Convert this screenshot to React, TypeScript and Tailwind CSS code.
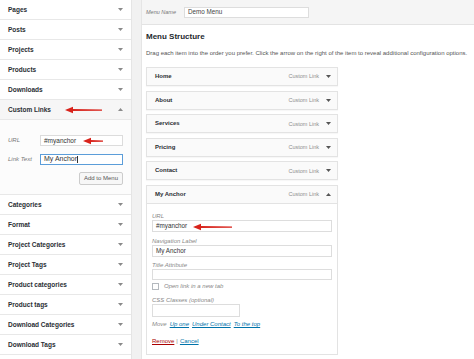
import React from "react";

const topSections = ["Pages", "Posts", "Projects", "Products", "Downloads"];
const bottomSections = [
  "Categories",
  "Format",
  "Project Categories",
  "Project Tags",
  "Product categories",
  "Product tags",
  "Download Categories",
  "Download Tags",
];
const menuItems = ["Home", "About", "Services", "Pricing", "Contact"];

function Caret({ up = false, className = "" }: { up?: boolean; className?: string }) {
  return (
    <svg width="5" height="3" viewBox="0 0 5 3" className={className}>
      <polygon points={up ? "0,3 5,3 2.5,0" : "0,0 5,0 2.5,3"} fill="currentColor" />
    </svg>
  );
}

function RedArrow({ x, y, w }: { x: number; y: number; w: number }) {
  // arrow points left, head at (x, y)
  return (
    <svg
      className="absolute pointer-events-none"
      style={{ left: x, top: y - 4, width: w, height: 8 }}
      viewBox={`0 0 ${w} 8`}
    >
      <polygon points={`0,4 8,0.8 8,7.2`} fill="#d8231b" />
      <polygon points={`7,3.1 ${w},3.5 ${w},4.7 7,4.9`} fill="#d8231b" />
    </svg>
  );
}

function SideRow({ label }: { label: string }) {
  return (
    <div className="h-[20px] shrink-0 flex items-center justify-between pl-[8px] pr-[8px] border-b border-[#e8e8e8] bg-white">
      <span className="text-[6.5px] font-bold text-[#2a2e33]">{label}</span>
      <Caret className="text-[#8a8a8a]" />
    </div>
  );
}

function MenuBox({ label, open = false }: { label: string; open?: boolean }) {
  return (
    <div className="h-[19px] shrink-0 flex items-center justify-between pl-[8px] pr-[6px] bg-[#fafafa] border border-[#e3e3e3] shadow-[0_1px_1px_rgba(0,0,0,0.03)]">
      <span className="text-[6px] font-bold text-[#2a2e33]">{label}</span>
      <span className="flex items-center gap-[7px]">
        <span className="text-[5.5px] text-[#8f8f8f]">Custom Link</span>
        <Caret up={open} className="text-[#555]" />
      </span>
    </div>
  );
}

export default function App() {
  return (
    <div className="relative w-[474px] h-[359px] overflow-hidden bg-[#f1f1f1] flex font-['Liberation_Sans',Arial,sans-serif]">
      {/* left accordion */}
      <aside className="w-[132px] shrink-0 flex flex-col bg-white border-r border-[#e5e5e5]">
        {topSections.map((s) => (
          <SideRow key={s} label={s} />
        ))}
        <div className="h-[20px] shrink-0 flex items-center justify-between pl-[8px] pr-[8px] border-b border-[#e8e8e8] bg-[#f6f6f6]">
          <span className="text-[6.5px] font-bold text-[#2a2e33]">Custom Links</span>
          <Caret up className="text-[#8a8a8a]" />
        </div>
        <div className="h-[75px] shrink-0 flex flex-col pt-[15px] pl-[8px] pr-[8px] bg-[#fcfcfc] border-b border-[#e8e8e8]">
          <div className="flex items-center justify-between">
            <span className="text-[6px] italic text-[#777]">URL</span>
            <div className="w-[83px] h-[11px] border border-[#dcdcdc] bg-white flex items-center pl-[3px] text-[6.5px] text-[#333]">
              #myanchor
            </div>
          </div>
          <div className="flex items-center justify-between mt-[8px]">
            <span className="text-[6px] italic text-[#777]">Link Text</span>
            <div className="w-[83px] h-[11px] border border-[#5b9dd9] bg-white flex items-center pl-[3px] text-[7px] text-[#333]">
              My Anchor<span className="w-px h-[7px] bg-[#333]" />
            </div>
          </div>
          <div className="flex justify-end mt-[7px]">
            <div className="w-[44px] h-[13px] border border-[#cccccc] rounded-[2px] bg-[#f7f7f7] flex items-center justify-center text-[6px] text-[#555]">
              Add to Menu
            </div>
          </div>
        </div>
        {bottomSections.map((s) => (
          <SideRow key={s} label={s} />
        ))}
      </aside>

      {/* right menu editor */}
      <main className="ml-[9px] flex-1 flex flex-col bg-white border-l border-[#e5e5e5]">
        <div className="h-[25px] shrink-0 flex items-center pl-[4px] bg-[#f5f5f5] border-b border-[#e3e3e3]">
          <span className="w-[38px] text-[5.5px] italic text-[#777]">Menu Name</span>
          <div className="w-[125px] h-[11px] border border-[#dddddd] bg-white flex items-center pl-[3px] text-[6.3px] text-[#444]">
            Demo Menu
          </div>
        </div>

        <div className="flex flex-col pl-[4px]">
          <h3 className="mt-[7px] h-[10px] leading-[10px] text-[8px] font-bold text-[#23282d]">Menu Structure</h3>
          <p className="mt-[7px] h-[8px] leading-[8px] text-[6px] text-[#555] whitespace-nowrap">
            Drag each item into the order you prefer. Click the arrow on the right of the item to reveal additional configuration options.
          </p>

          <div className="mt-[10px] w-[192px] flex flex-col gap-[4.6px]">
            {menuItems.map((m) => (
              <MenuBox key={m} label={m} />
            ))}
            <div className="flex flex-col">
              <MenuBox label="My Anchor" open />
              <div className="h-[151px] flex flex-col pl-[5px] pr-[5px] bg-white border border-t-0 border-[#e3e3e3]">
                <span className="mt-[8px] h-[8px] leading-[8px] text-[6px] italic text-[#888]">URL</span>
                <div className="h-[12px] border border-[#dddddd] flex items-center pl-[3px] text-[6.3px] text-[#333]">#myanchor</div>
                <span className="mt-[5px] h-[8px] leading-[8px] text-[6px] italic text-[#888]">Navigation Label</span>
                <div className="h-[12px] border border-[#dddddd] flex items-center pl-[3px] text-[6.3px] text-[#333]">My Anchor</div>
                <span className="mt-[4px] h-[8px] leading-[8px] text-[6px] italic text-[#888]">Title Attribute</span>
                <div className="h-[11px] border border-[#dddddd]" />
                <div className="mt-[3px] h-[8px] flex items-center gap-[5px]">
                  <div className="w-[7px] h-[7px] border border-[#b4b9be] bg-white" />
                  <span className="text-[6px] italic text-[#888]">Open link in a new tab</span>
                </div>
                <span className="mt-[5px] h-[8px] leading-[8px] text-[6px] italic text-[#888]">CSS Classes (optional)</span>
                <div className="w-[88px] h-[13px] border border-[#dddddd]" />
                <div className="mt-[4px] h-[8px] flex items-center gap-[3px] text-[6px] italic">
                  <span className="text-[#888]">Move</span>
                  <span className="text-[#0073aa] underline">Up one</span>
                  <span className="text-[#0073aa] underline">Under Contact</span>
                  <span className="text-[#0073aa] underline">To the top</span>
                </div>
                <div className="mt-[9px] h-[8px] flex items-center gap-[2px] text-[6px]">
                  <span className="text-[#a00] underline">Remove</span>
                  <span className="text-[#888]">|</span>
                  <span className="text-[#0073aa] underline">Cancel</span>
                </div>
              </div>
            </div>
          </div>
        </div>
      </main>

      {/* annotation arrows */}
      <RedArrow x={65} y={110} w={37} />
      <RedArrow x={83} y={141} w={20} />
      <RedArrow x={193} y={227} w={39} />
    </div>
  );
}
